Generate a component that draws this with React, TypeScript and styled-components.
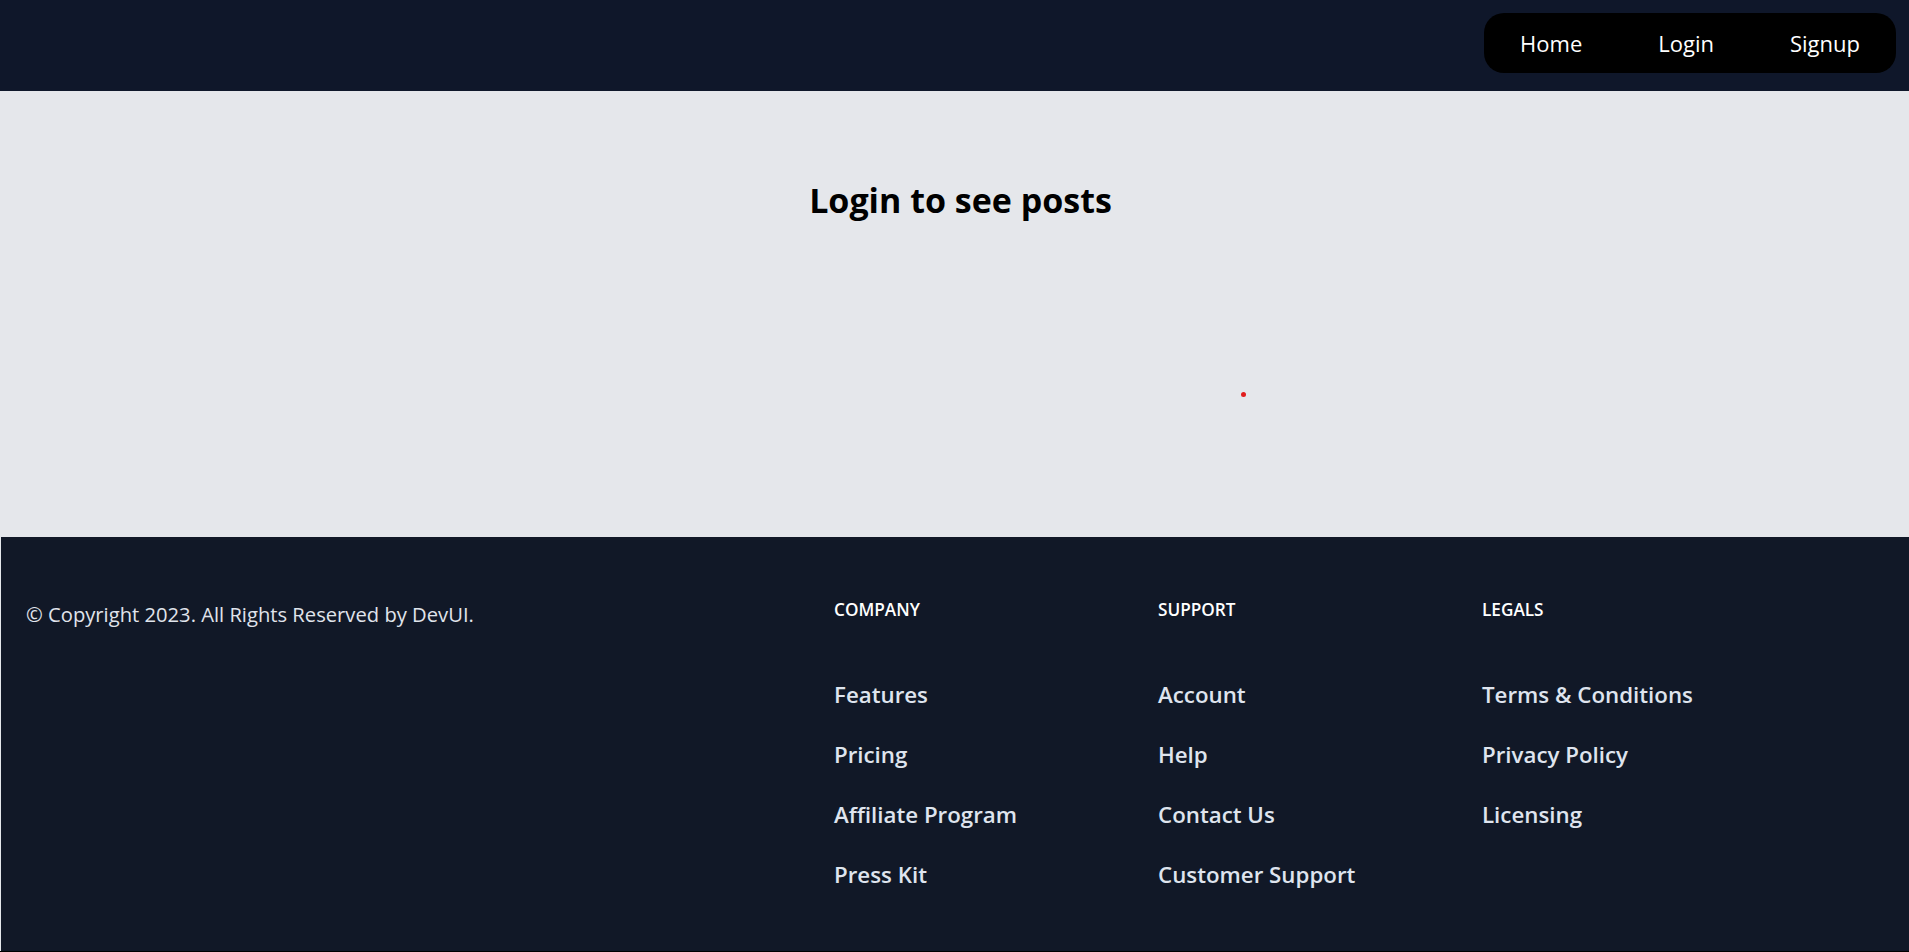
import React from "react";
import styled, { createGlobalStyle } from "styled-components";

const GlobalStyle = createGlobalStyle`
  * { box-sizing: border-box; }
  html, body { margin: 0; padding: 0; }
  body {
    font-family: "Open Sans", "Noto Sans", "Liberation Sans", sans-serif;
    background: #e5e7eb;
  }
`;

const Page = styled.div`
  display: flex;
  flex-direction: column;
  min-height: 952px;
  background: #e5e7eb;
  border-bottom: 1px solid #000;
`;

const Header = styled.header`
  height: 91px;
  background: #0f172a;
  display: flex;
  justify-content: flex-end;
  align-items: flex-start;
  padding: 13px 13px 0 0;
`;

const NavPill = styled.nav`
  height: 60px;
  background: #000;
  border-radius: 20px;
  display: flex;
  align-items: center;
  gap: 76px;
  padding: 0 36px;
`;

const NavLink = styled.a`
  color: #fff;
  font-size: 22px;
  font-weight: 400;
  text-decoration: none;
  cursor: pointer;
  line-height: 1;
  padding-bottom: 1px;
`;

const Main = styled.main`
  position: relative;
  height: 446px;
  padding-top: 86px;
  display: flex;
  justify-content: center;
  align-items: flex-start;
`;

const Title = styled.h1`
  margin: 0;
  font-size: 34px;
  font-weight: 700;
  color: #000;
  padding-left: 12px;
`;

const Dot = styled.span`
  position: absolute;
  left: 1241px;
  top: 301px;
  width: 5px;
  height: 5px;
  border-radius: 50%;
  background: #e11d1d;
`;

const Footer = styled.footer`
  height: 414px;
  margin-left: 1px;
  background: #111827;
  display: grid;
  grid-template-columns: 808px repeat(3, 324px);
  padding: 61px 0 0 25px;
  align-items: start;
`;

const Copyright = styled.p`
  margin: 2px 0 0;
  font-size: 20.2px;
  color: #e0e4ec;
`;

const Column = styled.div`
  display: flex;
  flex-direction: column;
`;

const ColumnTitle = styled.h2`
  margin: 0;
  font-size: 17.2px;
  font-weight: 600;
  text-transform: uppercase;
  color: #fff;
`;

const LinkList = styled.ul`
  list-style: none;
  margin: 59px 0 0;
  padding: 0;
  display: flex;
  flex-direction: column;
  gap: 30px;
`;

const FooterLink = styled.a`
  display: block;
  font-size: 22.3px;
  line-height: 30px;
  font-weight: 600;
  color: #dfe4ee;
  text-decoration: none;
  cursor: pointer;
`;

const columns = [
  { title: "Company", links: ["Features", "Pricing", "Affiliate Program", "Press Kit"] },
  { title: "Support", links: ["Account", "Help", "Contact Us", "Customer Support"] },
  { title: "Legals", links: ["Terms & Conditions", "Privacy Policy", "Licensing"] },
];

export default function App() {
  return (
    <>
      <GlobalStyle />
      <Page>
        <Header>
          <NavPill>
            <NavLink>Home</NavLink>
            <NavLink>Login</NavLink>
            <NavLink>Signup</NavLink>
          </NavPill>
        </Header>
        <Main>
          <Title>Login to see posts</Title>
          <Dot />
        </Main>
        <Footer>
          <Copyright>© Copyright 2023. All Rights Reserved by DevUI.</Copyright>
          {columns.map((col) => (
            <Column key={col.title}>
              <ColumnTitle>{col.title}</ColumnTitle>
              <LinkList>
                {col.links.map((l) => (
                  <li key={l}>
                    <FooterLink>{l}</FooterLink>
                  </li>
                ))}
              </LinkList>
            </Column>
          ))}
        </Footer>
      </Page>
    </>
  );
}
